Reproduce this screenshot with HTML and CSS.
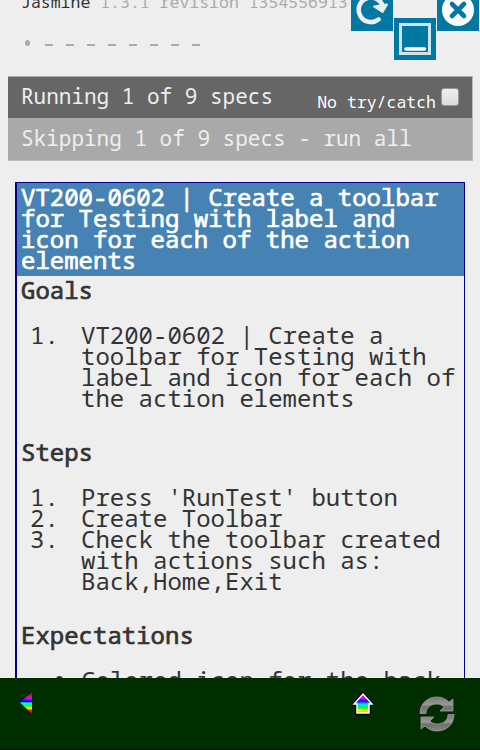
FILE: index.html
```html
<!DOCTYPE html>
<html lang="en">
<head>
<meta charset="utf-8">
<title>Jasmine</title>
<link rel="stylesheet" href="styles.css">
</head>
<body>
<main class="reporter">
  <div class="banner"><span class="name">Jasmine</span> 1.3.1 revision 1354556913</div>
  <div class="symbols"><i class="dot"></i><i></i><i></i><i></i><i></i><i></i><i></i><i></i><i></i></div>
  <div class="alert">
    <div class="bar running"><span>Running 1 of 9 specs</span><label class="catch">No try/catch<span class="box"></span></label></div>
    <div class="bar skipping">Skipping 1 of 9 specs - run all</div>
  </div>
  <section class="spec">
    <h1>VT200-0602 | Create a toolbar<br>for Testing with label and<br>icon for each of the action<br>elements</h1>
    <h2>Goals</h2>
    <ol><li><b>1.</b><span>VT200-0602 | Create a<br>toolbar for Testing with<br>label and icon for each of<br>the action elements</span></li></ol>
    <h2>Steps</h2>
    <ol>
      <li><b>1.</b><span>Press 'RunTest' button</span></li>
      <li><b>2.</b><span>Create Toolbar</span></li>
      <li><b>3.</b><span>Check the toolbar created<br>with actions such as:<br>Back,Home,Exit</span></li>
    </ol>
    <h2>Expectations</h2>
    <ol><li><b class="bullet"></b><span>Colored icon for the back</span></li></ol>
  </section>
  <svg class="tool reload" viewBox="0 0 42 42"><path d="M0 0H42V42H0z" fill="#0277a2"/><path d="M32 18A12.300 12.300 0 1 0 27.500 30.500" fill="none" stroke="#eee" stroke-width="4.600" stroke-linecap="round"/><path d="M23 17.500L36 15.500L31.500 23z" fill="#eee" stroke="#eee" stroke-width="2" stroke-linejoin="round"/></svg>
  <svg class="tool window" viewBox="0 0 42 42"><path d="M0 0H42V42H0z" fill="#0277a2"/><path d="M6.500 6.500H35.500V35.500H6.500z" fill="none" stroke="#cfe3eb" stroke-width="3"/><path d="M12 31H30.500" stroke="#fff" stroke-width="3.600" stroke-linecap="round"/></svg>
  <svg class="tool close" viewBox="0 0 42 42"><path d="M0 0H42V42H0z" fill="#0277a2"/><circle cx="21" cy="21" r="16" fill="#fff"/><path d="M15 15L27 27M27 15L15 27" stroke="#0277a2" stroke-width="4.600" stroke-linecap="round"/></svg>
</main>
<footer class="actions">
  <svg class="back" viewBox="0 0 12 22"><defs>
    <linearGradient id="rainbow" x1="0" y1="0" x2="0" y2="1"><stop offset="0" stop-color="#800"/><stop offset=".15" stop-color="#b02020"/><stop offset=".26" stop-color="#f0f"/><stop offset=".37" stop-color="#60f"/><stop offset=".43" stop-color="#00f"/><stop offset=".5" stop-color="#0ff"/><stop offset=".6" stop-color="#0f4"/><stop offset=".68" stop-color="#8f0"/><stop offset=".74" stop-color="#ff0"/><stop offset=".83" stop-color="#f20"/><stop offset="1" stop-color="#b00"/></linearGradient>
    <linearGradient id="homefill" x1="0" y1="0" x2="0" y2="1"><stop offset="0" stop-color="#f04"/><stop offset=".2" stop-color="#f0f"/><stop offset=".38" stop-color="#20f"/><stop offset=".53" stop-color="#0df"/><stop offset=".72" stop-color="#0f2"/><stop offset=".86" stop-color="#ff0"/><stop offset="1" stop-color="#f90"/></linearGradient>
    <linearGradient id="metal" x1="0" y1="0" x2="0" y2="1"><stop offset="0" stop-color="#777"/><stop offset=".45" stop-color="#999"/><stop offset=".6" stop-color="#707070"/><stop offset="1" stop-color="#888"/></linearGradient>
  </defs><path d="M12 0V22L0 10.500z" fill="url(#rainbow)"/></svg>
  <svg class="home" viewBox="0 0 22 24"><path d="M11 2L20 12H17V21H5V12H2z" fill="none" stroke="#000" stroke-width="3.500"/><path d="M11 2L20 12H17V21H5V12H2z" fill="url(#homefill)" stroke="#fff" stroke-width="1.500"/></svg>
  <svg class="sync" viewBox="0 0 38 38"><g fill="url(#metal)" stroke="#999" stroke-width=".8" stroke-linejoin="round"><path d="M2 18.500C2 8 10 2 19 2C24 2 28 4 31 7L35 4V16H22L26 12C24 10 22 9 19 9C12 9 8 13 8 18.500z"/><path d="M36 19.500C36 30 28 36 19 36C14 36 10 34 7 31L3 34V22H16L12 26C14 28 16 29 19 29C26 29 30 25 30 19.500z"/></g></svg>
</footer>
</body>
</html>
```
FILE: styles.css
```css
* { box-sizing: border-box; }
body {
  margin: 0;
  width: 480px;
  height: 750px;
  overflow: hidden;
  display: flex;
  flex-direction: column;
  background: #eee;
  color: #333;
  font-family: "Droid Sans Mono", "Noto Sans Mono", "DejaVu Sans Mono", monospace;
  white-space: nowrap;
}
.reporter {
  position: relative;
  height: 678px;
  overflow: hidden;
  padding: 0 8px;
}
.banner {
  height: 20px;
  margin: -8px 0 0 13px;
  font-size: 16.500px;
  line-height: 20px;
  color: #aaa;
}
.name { color: #333; }
.symbols {
  display: flex;
  gap: 13px;
  height: 64px;
  padding: 32px 0 0 37px;
}
.symbols i { width: 8px; height: 2px; background: #aaa; }
.symbols .dot {
  width: 5px;
  height: 6px;
  margin: -4px 3px 0 -20px;
  border-radius: 50%;
}
.symbols .dot + i { margin-left: -1px; }
.alert { width: 465px; border: 1px solid #bbb; border-width: 0 1px 1px 0; }
.bar {
  height: 42px;
  padding-left: 13px;
  font-size: 21px;
  line-height: 40px;
  color: #eee;
}
.running {
  display: flex;
  justify-content: space-between;
  padding-right: 13px;
  line-height: 38px;
  background: #666;
  border-top: 1px solid #aaa;
}
.catch {
  display: flex;
  font-size: 16.500px;
  line-height: 49px;
  color: #fff;
}
.box {
  width: 18px;
  height: 18px;
  margin: 11px 0 0 5px;
  border: 1px solid #999;
  border-radius: 3px;
  background: linear-gradient(#eee, #ddd);
}
.skipping { background: #a9a9a9; }
.spec {
  width: 450px;
  height: 700px;
  margin: 21px 0 0 7px;
  border: 1px solid #00008b;
  border-left-width: 2px;
  font-size: 24px;
  line-height: 21px;
}
h1, h2 { margin: 0; font-size: inherit; font-weight: 400; -webkit-text-stroke: .7px currentColor; }
h1 {
  height: 93px;
  padding: 3px 0 0 4px;
  background: #4682b4;
  color: #fff;
}
h2 { padding: 3px 0 0 4px; }
ol { list-style: none; margin: 24px 0 30px; padding: 0; }
li { display: flex; }
li b { width: 64px; padding-left: 13px; font-weight: 400; }
li .bullet::before {
  content: "";
  display: block;
  width: 7px;
  height: 7px;
  margin: 7px 0 0 26px;
  border-radius: 50%;
  background: #333;
}
.tool { position: absolute; width: 42px; height: 42px; }
.reload { left: 351px; top: -11px; }
.window { left: 394px; top: 18px; }
.close { left: 437px; top: -11px; }
.actions {
  display: flex;
  height: 72px;
  padding-left: 20px;
  background: #002d00;
  border-bottom: 1px solid #001800;
}
.back { width: 12px; height: 22px; margin-top: 14px; }
.home { width: 22px; height: 24px; margin: 14px 0 0 320px; }
.sync { width: 38px; height: 38px; margin: 17px 0 0 44px; }
```
